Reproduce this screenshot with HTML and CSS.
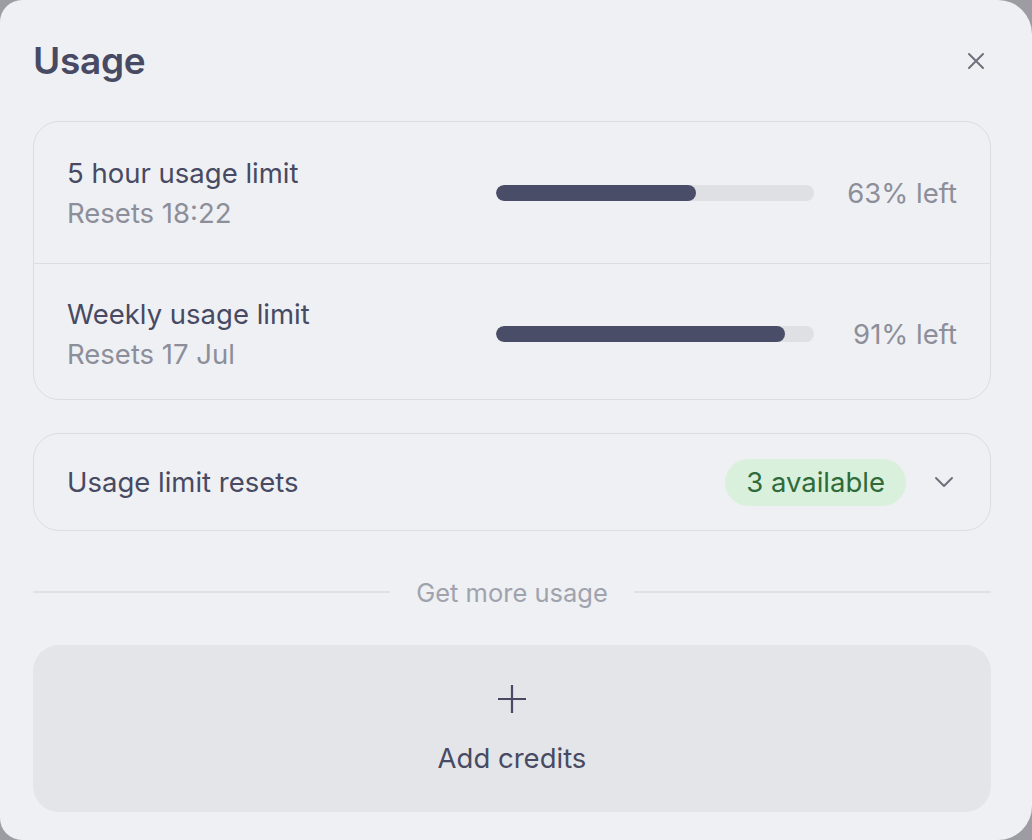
FILE: index.html
```html
<!DOCTYPE html>
<html>
<head>
  <title>Usage</title>
  <link rel="stylesheet" href="styles.css">
</head>
<body>

<div class="panel">
  <div class="panel-head">
    <h1>Usage</h1>
    <button class="close" type="button" aria-label="Close">
      <svg width="20" height="20" viewBox="0 0 20 20"><path d="M3 3 L17 17 M17 3 L3 17" stroke="currentColor" stroke-width="2" stroke-linecap="round" fill="none"/></svg>
    </button>
  </div>

  <div class="card limits">
    <div class="limit-row">
      <div class="limit-text">
        <div class="limit-name">5 hour usage limit</div>
        <div class="limit-reset">Resets 18:22</div>
      </div>
      <div class="bar"><div class="bar-fill" style="width: 63%"></div></div>
      <div class="limit-left">63% left</div>
    </div>
    <div class="limit-row">
      <div class="limit-text">
        <div class="limit-name">Weekly usage limit</div>
        <div class="limit-reset">Resets 17 Jul</div>
      </div>
      <div class="bar"><div class="bar-fill" style="width: 91%"></div></div>
      <div class="limit-left">91% left</div>
    </div>
  </div>

  <div class="card resets">
    <span class="resets-label">Usage limit resets</span>
    <span class="badge">3 available</span>
    <svg class="chevron" width="22" height="14" viewBox="0 0 22 14"><path d="M3 3 L11 11 L19 3" stroke="currentColor" stroke-width="2" stroke-linecap="round" stroke-linejoin="round" fill="none"/></svg>
  </div>

  <div class="divider"><span>Get more usage</span></div>

  <button class="add-credits" type="button">
    <svg width="32" height="32" viewBox="0 0 32 32"><path d="M16 2 V30 M2 16 H30" stroke="currentColor" stroke-width="2.2" fill="none"/></svg>
    <span>Add credits</span>
  </button>
</div>

</body>
</html>
```

FILE: styles.css
```css
html, body {
  margin: 0;
  height: 100%;
}
body {
  background: #9c9ca2;
  font-family: Inter, "Liberation Sans", sans-serif;
  color: #474a62;
}
.panel {
  box-sizing: border-box;
  width: 1032px;
  height: 840px;
  background: #eef0f3;
  border-radius: 22px 34px 34px 22px;
  padding: 0 41px 0 33px;
}
.panel-head {
  display: flex;
  align-items: center;
  justify-content: space-between;
  height: 121px;
}
.panel-head h1 {
  margin: 0;
  font-size: 37px;
  font-weight: 600;
  letter-spacing: -0.3px;
  color: #474a62;
}
.close {
  border: none;
  background: none;
  padding: 0;
  color: #6e707d;
  display: flex;
  margin-right: 5px;
}
.card {
  border: 1.5px solid #dcdde2;
  border-radius: 26px;
}
.limit-row {
  display: flex;
  align-items: center;
  height: 141px;
  padding: 0 33px;
}
.limit-row + .limit-row {
  box-sizing: border-box;
  height: 136px;
  padding-top: 4px;
  border-top: 1.5px solid #dcdde2;
}
.limit-text {
  flex: 1;
}
.limit-name {
  font-size: 27.5px;
  line-height: 40px;
  color: #474a62;
}
.limit-reset {
  font-size: 27.5px;
  line-height: 40px;
  color: #8c8e9a;
}
.bar {
  width: 318px;
  height: 16px;
  border-radius: 8px;
  background: #dfe0e4;
  overflow: hidden;
}
.bar-fill {
  height: 100%;
  border-radius: 8px;
  background: #4a4d67;
}
.limit-left {
  width: 143px;
  text-align: right;
  font-size: 27.5px;
  color: #8c8e9a;
}
.resets {
  margin-top: 33px;
  height: 96px;
  display: flex;
  align-items: center;
  padding: 0 35px 0 33px;
}
.resets-label {
  flex: 1;
  font-size: 27.5px;
}
.badge {
  background: #d9f0dd;
  color: #2f6b3a;
  font-size: 27.5px;
  height: 47px;
  line-height: 47px;
  padding: 0 21px;
  border-radius: 24px;
}
.chevron {
  color: #6e707d;
  margin-left: 27px;
}
.divider {
  display: flex;
  align-items: center;
  gap: 26px;
  margin-top: 46px;
  height: 30px;
  font-size: 25.5px;
  color: #a0a2ad;
}
.divider::before,
.divider::after {
  content: "";
  flex: 1;
  height: 2px;
  background: #e0e1e5;
}
.add-credits {
  box-sizing: border-box;
  margin-top: 38px;
  width: 100%;
  height: 167px;
  border: none;
  border-radius: 26px;
  background: #e4e5e9;
  display: flex;
  flex-direction: column;
  align-items: center;
  justify-content: center;
  gap: 26px;
  padding-top: 2px;
  color: #474a62;
  font-family: inherit;
  font-size: 27.5px;
}
```
